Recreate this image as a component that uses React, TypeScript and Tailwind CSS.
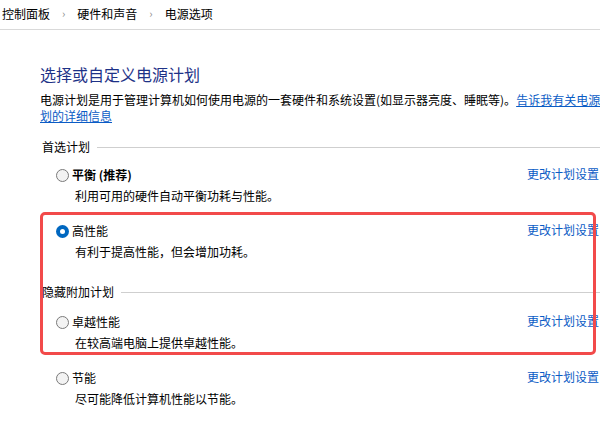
import React from 'react';

const font = { fontFamily: '"Noto Sans CJK SC", "Noto Sans", sans-serif' };

interface Plan {
  name: string;
  desc: string;
  selected?: boolean;
  bold?: boolean;
}

function Radio({ checked }: { checked?: boolean }) {
  if (checked) {
    return (
      <span className="w-[13px] h-[13px] rounded-full bg-[#0067c0] flex items-center justify-center shrink-0">
        <span className="w-[5px] h-[5px] rounded-full bg-white" />
      </span>
    );
  }
  return <span className="w-[13px] h-[13px] rounded-full border border-[#7a7a7a] bg-[#f3f3f3] shrink-0" />;
}

function PlanRow({ plan, className }: { plan: Plan; className?: string }) {
  return (
    <div className={className}>
      <div className="flex items-center">
        <div className="w-[487px] shrink-0 flex items-center pl-[16px] gap-[3px]">
          <Radio checked={plan.selected} />
          <span className={`text-[12px] leading-[16px] text-black ${plan.bold ? 'font-bold' : ''}`}>{plan.name}</span>
        </div>
        <span className="text-[12px] leading-[16px] text-[#0b5cc5] whitespace-nowrap -mt-[3px]">更改计划设置</span>
      </div>
      <div className="mt-[5px] pl-[35px] text-[12px] leading-[16px] text-black">{plan.desc}</div>
    </div>
  );
}

function SectionLabel({ label, className }: { label: string; className?: string }) {
  return (
    <div className={`flex items-center gap-[7px] pl-[2px] ${className ?? ''}`}>
      <span className="text-[12px] leading-[16px] text-black whitespace-nowrap">{label}</span>
      <div className="flex-1 border-t border-[#cfcfcf]" />
    </div>
  );
}

export default function App() {
  return (
    <div className="relative w-[600px] h-[433px] overflow-hidden bg-white" style={font}>
      {/* 面包屑 */}
      <div className="h-[32px] border-b border-[#d9d9d9] flex items-center pl-[2px] text-[12px] text-black -mt-[2px]">
        <span>控制面板</span>
        <span className="mx-[12px] text-[#8a8a8a] text-[11px]">›</span>
        <span>硬件和声音</span>
        <span className="mx-[12px] text-[#8a8a8a] text-[11px]">›</span>
        <span>电源选项</span>
      </div>

      <div className="pl-[40px] w-[600px]">
        <h1 className="mt-[34px] text-[16px] leading-[20px] text-[#1e3287] font-normal">选择或自定义电源计划</h1>
        <p className="mt-[8px] text-[12px] leading-[16px] text-black whitespace-nowrap">
          电源计划是用于管理计算机如何使用电源的一套硬件和系统设置(如显示器亮度、睡眠等)。
          <span className="text-[#0b5cc5] underline">告诉我有关电源计</span>
          <br />
          <span className="text-[#0b5cc5] underline">划的详细信息</span>
        </p>

        <SectionLabel label="首选计划" className="mt-[15px]" />
        <PlanRow className="mt-[12px]" plan={{ name: '平衡 (推荐)', desc: '利用可用的硬件自动平衡功耗与性能。', bold: true }} />
        <PlanRow className="mt-[19px]" plan={{ name: '高性能', desc: '有利于提高性能，但会增加功耗。', selected: true }} />

        <SectionLabel label="隐藏附加计划" className="mt-[24px]" />
        <PlanRow className="mt-[14px]" plan={{ name: '卓越性能', desc: '在较高端电脑上提供卓越性能。' }} />
        <PlanRow className="mt-[19px]" plan={{ name: '节能', desc: '尽可能降低计算机性能以节能。' }} />
      </div>

      {/* 红色标注框 */}
      <div className="absolute left-[40px] top-[212px] w-[556px] h-[143px] border-[3px] border-[#f24a4a] rounded-[5px] pointer-events-none" />
    </div>
  );
}
